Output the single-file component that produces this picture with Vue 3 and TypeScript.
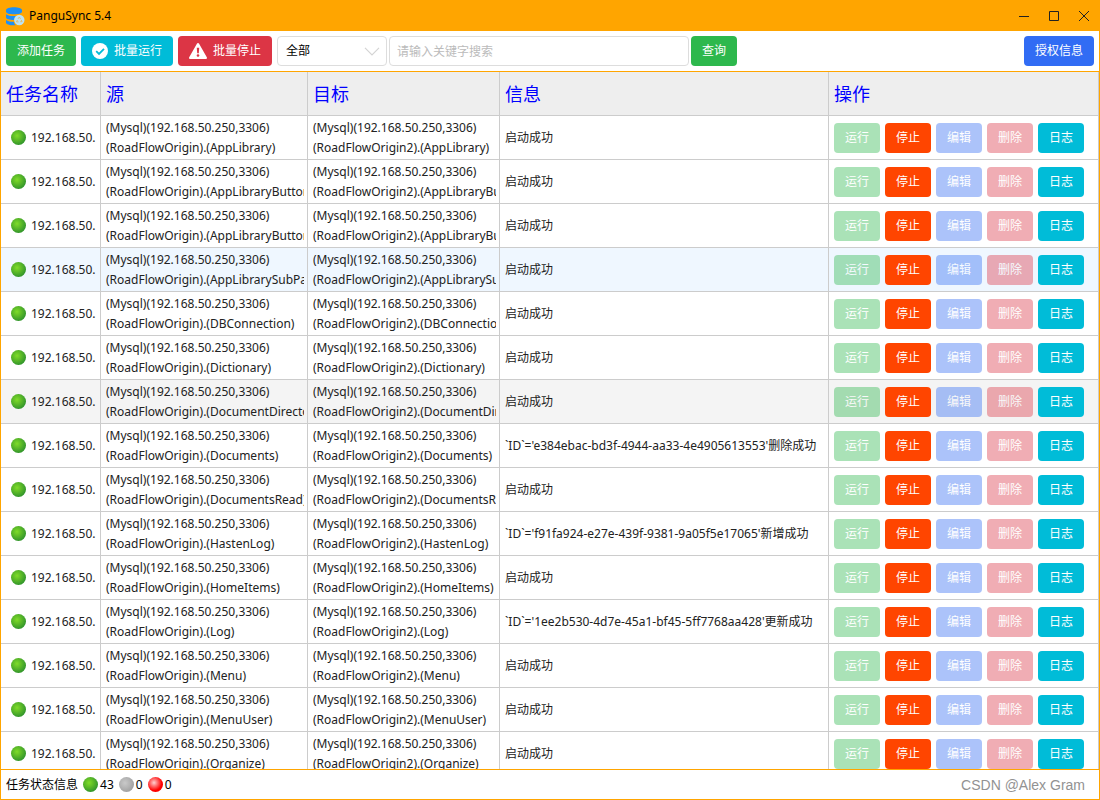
<script setup lang="ts">
import { ref } from 'vue'

interface Task {
  name: string
  table: string
  info: string
  state?: 'selected' | 'hovered'
}

const started = '启动成功'
const host = '(Mysql)(192.168.50.250,3306)'
const filter = ref('全部')
const keyword = ref('')

function task(table: string, info = started, state?: Task['state']): Task {
  return { name: '192.168.50.', table, info, state }
}

const tasks: Task[] = [
  task('AppLibrary'),
  task('AppLibraryButton'),
  task('AppLibraryButtons'),
  task('AppLibrarySubPage', started, 'selected'),
  task('DBConnection'),
  task('Dictionary'),
  task('DocumentDirectory', started, 'hovered'),
  task('Documents', "`ID`='e384ebac-bd3f-4944-aa33-4e4905613553'删除成功"),
  task('DocumentsRead'),
  task('HastenLog', "`ID`='f91fa924-e27e-439f-9381-9a05f5e17065'新增成功"),
  task('HomeItems'),
  task('Log', "`ID`='1ee2b530-4d7e-45a1-bf45-5ff7768aa428'更新成功"),
  task('Menu'),
  task('MenuUser'),
  task('Organize'),
]
</script>

<template>
  <div class="window">
    <header class="titlebar">
      <svg class="logo" width="19" height="19" viewBox="0 0 19 19" aria-hidden="true">
        <path d="M0 3.200C0 1.400 3.600.3 8 .3s8 1.100 8 2.900v1.600C16 6.500 12.400 7.300 8 7.300S0 6.500 0 4.800z" fill="#1e90f5" />
        <path d="M0 7.200c1.500 1.300 4.500 1.900 8 1.900 1.400 0 2.300-.1 3.200-.2-1.800.9-2.900 2.200-3.300 4.100C3.500 13 0 12.100 0 10.300z" fill="#1e90f5" />
        <path d="M0 12.900c1.600 1.300 4.500 1.900 7.800 1.900.2 1.400.8 2.600 1.700 3.400C4.600 18.500 0 17.500 0 15.700z" fill="#1e90f5" />
        <circle cx="13.300" cy="13" r="5.200" fill="#bbe3f5" />
        <path d="M12 11.900 13.300 10l1.300 1.900M15.100 12.800l1 1.900h-1.900M12.600 14.900h-2.100l1-1.900" fill="none" stroke="#e8b860" stroke-width=".9" />
      </svg>
      <h1>PanguSync 5.4</h1>
      <div class="controls">
        <button type="button" aria-label="最小化">
          <svg width="10" height="10" viewBox="0 0 10 10"><path d="M0 5.500h10" /></svg>
        </button>
        <button type="button" aria-label="最大化">
          <svg width="10" height="10" viewBox="0 0 10 10"><path d="M.5.5h9v9h-9z" /></svg>
        </button>
        <button type="button" aria-label="关闭">
          <svg width="10" height="10" viewBox="0 0 10 10"><path d="M0 0l10 10M10 0L0 10" /></svg>
        </button>
      </div>
    </header>

    <div class="toolbar">
      <button type="button" class="btn green">添加任务</button>
      <button type="button" class="btn cyan">
        <svg width="16" height="16" viewBox="0 0 16 16" aria-hidden="true">
          <circle cx="8" cy="8" r="8" fill="#fff" />
          <path d="M4.200 8.200 7 10.900l5-5.100" fill="none" stroke="#00bcd8" stroke-width="1.800" />
        </svg>
        批量运行
      </button>
      <button type="button" class="btn red">
        <svg width="18" height="16" viewBox="0 0 18 16" aria-hidden="true">
          <path d="M7.900.7a1.250 1.250 0 0 1 2.200 0l7.700 13.500a1.200 1.200 0 0 1-1.100 1.800H1.300a1.200 1.200 0 0 1-1.100-1.800z" fill="#fff" />
          <path d="M7.800 4.800h2.400l-.4 5.400H8.200z" fill="#dc3545" />
          <circle cx="9" cy="12.500" r="1.300" fill="#dc3545" />
        </svg>
        批量停止
      </button>
      <div class="picker">
        <select v-model="filter" aria-label="任务状态">
          <option>全部</option>
        </select>
        <svg width="16" height="9" viewBox="0 0 16 9" aria-hidden="true">
          <path d="M1 .8l7 7 7-7" fill="none" stroke="#d4d4d4" stroke-width="1.200" />
        </svg>
      </div>
      <input v-model="keyword" type="text" class="search" placeholder="请输入关键字搜索" aria-label="关键字" />
      <button type="button" class="btn green query">查询</button>
      <button type="button" class="btn blue license">授权信息</button>
    </div>

    <main class="list">
      <table>
        <colgroup>
          <col class="c-name" />
          <col class="c-source" />
          <col class="c-target" />
          <col />
          <col class="c-actions" />
        </colgroup>
        <thead>
          <tr>
            <th scope="col">任务名称</th>
            <th scope="col">源</th>
            <th scope="col">目标</th>
            <th scope="col">信息</th>
            <th scope="col">操作</th>
          </tr>
        </thead>
        <tbody>
          <tr v-for="t in tasks" :key="t.table" :class="t.state">
            <td>
              <div class="name"><i class="ball ok"></i>{{ t.name }}</div>
            </td>
            <td>
              <div class="clip">{{ host }}<br />(RoadFlowOrigin).({{ t.table }})</div>
            </td>
            <td>
              <div class="clip">{{ host }}<br />(RoadFlowOrigin2).({{ t.table }})</div>
            </td>
            <td>
              <div class="clip">{{ t.info }}</div>
            </td>
            <td>
              <div class="actions">
                <button type="button" class="btn green" disabled>运行</button>
                <button type="button" class="btn orange">停止</button>
                <button type="button" class="btn blue" disabled>编辑</button>
                <button type="button" class="btn red" disabled>删除</button>
                <button type="button" class="btn cyan">日志</button>
              </div>
            </td>
          </tr>
        </tbody>
      </table>
    </main>

    <footer class="status">
      <span class="label">任务状态信息</span>
      <span class="count"><i class="ball ok"></i>43</span>
      <span class="count"><i class="ball idle"></i>0</span>
      <span class="count"><i class="ball fail"></i>0</span>
      <span class="credit">CSDN @Alex Gram</span>
    </footer>
  </div>
</template>

<style>
body {
  margin: 0;
}
</style>

<style scoped>
* {
  box-sizing: border-box;
}

.window {
  display: flex;
  flex-direction: column;
  height: 100vh;
  border: 1px solid #ffa500;
  background: #fff;
  color: #222;
  font: 12px/20px "Noto Sans", "Noto Sans CJK SC", sans-serif;
}

.titlebar {
  display: flex;
  flex: none;
  align-items: center;
  height: 30px;
  padding: 0 10px 0 5px;
  background: #ffa500;
}

h1 {
  margin: 0 0 0 4px;
  color: #000;
  font-size: 12px;
  font-weight: 400;
}

.controls {
  display: flex;
  gap: 10px;
  margin-left: auto;
}

.controls button {
  display: grid;
  place-items: center;
  width: 20px;
  height: 20px;
  margin: 0;
  padding: 0;
  border: 0;
  background: none;
}

.controls button:last-child {
  margin-right: -5px;
}

.controls path {
  fill: none;
  stroke: #222;
}

.toolbar {
  display: flex;
  flex: none;
  align-items: center;
  height: 41px;
  padding: 0 5px;
  border-bottom: 1px solid #ffa500;
}

.btn {
  display: flex;
  flex: none;
  align-items: center;
  gap: 6px;
  height: 30px;
  padding: 0 11px;
  border: 0;
  border-radius: 4px;
  color: #fff;
  font: inherit;
  white-space: nowrap;
}

.btn:disabled {
  opacity: 0.4;
}

.toolbar .btn {
  margin-right: 5px;
}

.green {
  background: #2db84d;
}

.cyan {
  background: #00bcd8;
}

.red {
  background: #dc3545;
}

.blue {
  background: #316cf4;
}

.orange {
  background: #ff4500;
}

.picker {
  position: relative;
  flex: none;
  width: 110px;
  margin-right: 2px;
}

.picker svg {
  position: absolute;
  top: 11px;
  right: 7px;
  pointer-events: none;
}

select,
.search {
  display: block;
  height: 30px;
  margin: 0;
  padding: 0 8px;
  border: 1px solid #ddd;
  border-radius: 4px;
  outline: 0;
  background: #fff;
  color: #000;
  font: inherit;
}

select {
  width: 100%;
  appearance: none;
}

.search {
  flex: 0 1 300px;
  min-width: 0;
  margin-right: 2px;
  padding: 0 7px;
}

.search::placeholder {
  color: #bbb;
  opacity: 1;
}

.toolbar .license {
  margin: 0 0 0 auto;
}

.list {
  flex: 1;
  min-height: 0;
  overflow: hidden;
}

table {
  width: 100%;
  table-layout: fixed;
  border-collapse: separate;
  border-spacing: 0;
}

.c-name {
  width: 100px;
}

.c-source {
  width: 207px;
}

.c-target {
  width: 192px;
}

.c-actions {
  width: 270px;
}

th,
td {
  height: 44px;
  padding: 0 3px 0 5px;
  border: solid #ccc;
  border-width: 0 1px 1px 0;
  text-align: left;
  vertical-align: middle;
}

th {
  background: #eee;
  color: #00f;
  font-size: 18px;
  font-weight: 400;
}

.selected {
  background: #eff7ff;
}

.hovered {
  background: #f4f4f4;
}

.clip {
  overflow: hidden;
  white-space: nowrap;
}

.name {
  display: flex;
  align-items: center;
  gap: 5px;
  padding-left: 5px;
}

.ball {
  flex: none;
  width: 15px;
  height: 15px;
  border-radius: 50%;
}

.ok {
  background: radial-gradient(circle at 40% 38%, #7fdc2a 0, #5cba28 35%, #35982c 70%, #3f9d35 100%);
}

.idle {
  background: radial-gradient(circle at 40% 40%, #c9c9c9 0, #b4b4b4 40%, #a0a0a0 75%, #aaa 100%);
}

.fail {
  background: radial-gradient(circle at 40% 38%, #ffd0d0 0, #ff7878 25%, #f00 60%, #e80000 100%);
}

.actions {
  display: flex;
  gap: 5px;
}

.status {
  display: flex;
  flex: none;
  align-items: center;
  gap: 5px;
  height: 30px;
  padding: 0 14px 0 5px;
  border-top: 1px solid #ffa500;
  color: #000;
}

.count {
  display: flex;
  align-items: center;
  gap: 2px;
}

.credit {
  margin-left: auto;
  color: #929292;
  font-family: "Liberation Sans", Arial, sans-serif;
  font-size: 14px;
}
</style>
